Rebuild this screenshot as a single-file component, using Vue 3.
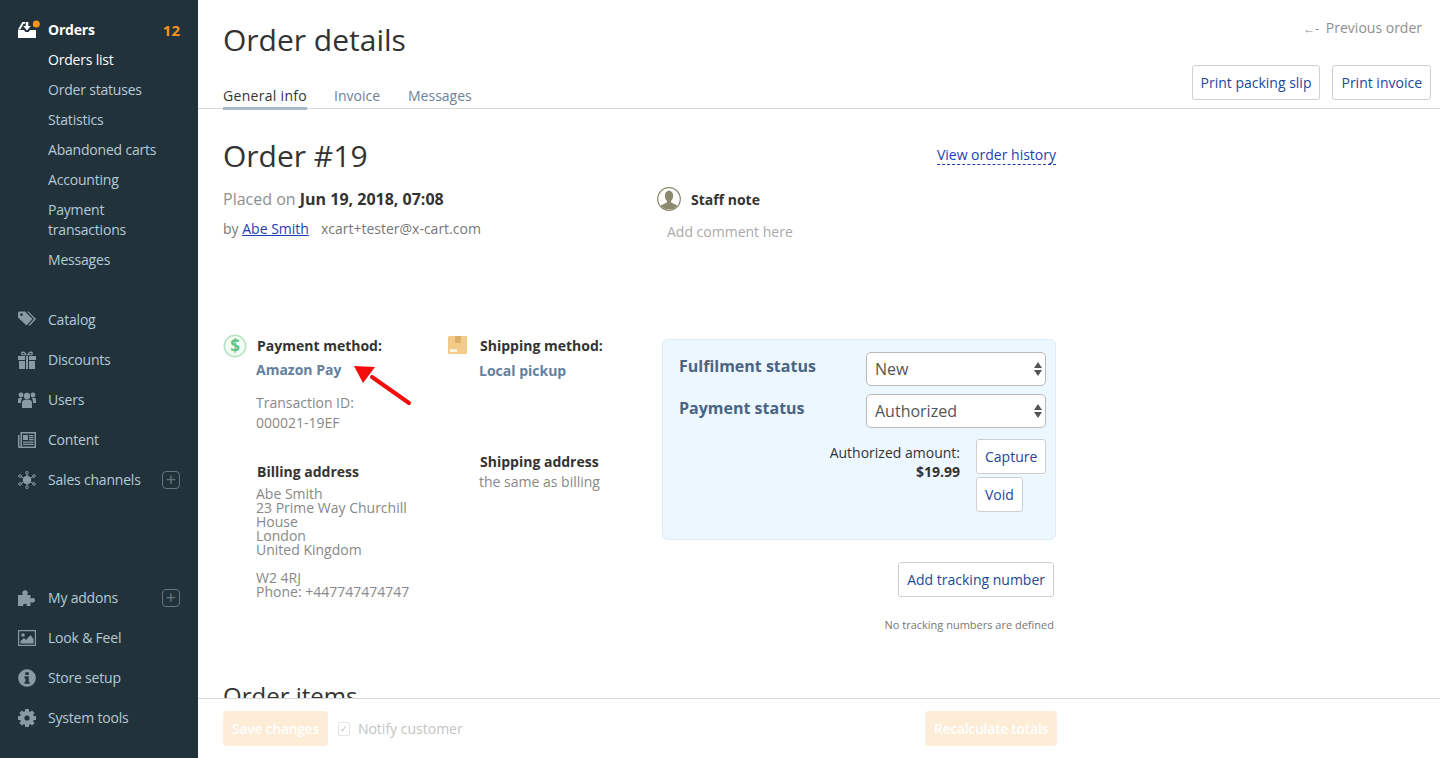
<template>
  <div class="page">
    <aside class="sidebar">
      <div class="nav-group">
        <div class="nav-item orders-head">
          <span class="nav-icon">
            <svg width="22" height="20" viewBox="0 0 22 20">
              <path d="M0 10H6L7.500 12H10.500L12 10H18V18H0Z" fill="#fff" />
              <path d="M0 9.500L4.300 2H7V3.800H5.500L2.400 9.500Z" fill="#fff" />
              <path d="M7.700 2H10.300V6H12.800L9 10.500L5.200 6H7.700Z" fill="#fff" />
              <circle cx="18.300" cy="4" r="3.500" fill="#f7931e" />
            </svg>
          </span>
          <span class="head-label">Orders</span>
          <span class="count">12</span>
        </div>
        <div
          v-for="sub in subItems"
          :key="sub"
          class="sub-item"
          :class="{ active: sub === 'Orders list' }"
        >{{ sub }}</div>
        <div class="nav-spacer"></div>
        <div v-for="item in mainItems" :key="item.label" class="nav-item">
          <span class="nav-icon">
            <svg width="18" height="18" viewBox="0 0 18 18" v-html="item.icon"></svg>
          </span>
          <span class="nav-label">{{ item.label }}</span>
          <span v-if="item.plus" class="plus">+</span>
        </div>
      </div>
      <div class="nav-group bottom">
        <div v-for="item in bottomItems" :key="item.label" class="nav-item">
          <span class="nav-icon">
            <svg width="18" height="18" viewBox="0 0 18 18" v-html="item.icon"></svg>
          </span>
          <span class="nav-label">{{ item.label }}</span>
          <span v-if="item.plus" class="plus">+</span>
        </div>
      </div>
    </aside>

    <main class="main">
      <header class="top">
        <div class="top-left">
          <h1>Order details</h1>
          <nav class="tabs">
            <a class="tab current">General info</a>
            <a class="tab">Invoice</a>
            <a class="tab last">Messages</a>
          </nav>
        </div>
        <div class="top-right">
          <div class="prev"><span class="prev-arrow">←-</span> Previous order</div>
          <div class="top-buttons">
            <button class="btn">Print packing slip</button>
            <button class="btn">Print invoice</button>
          </div>
        </div>
      </header>

      <section class="content">
        <div class="order-row">
          <h2>Order #19</h2>
          <a class="history">View order history</a>
        </div>

        <div class="info-row">
          <div class="placed">
            <div class="placed-date">Placed on <b>Jun 19, 2018, 07:08</b></div>
            <div class="placed-by">by <a class="user-link">Abe Smith</a><span class="email">xcart+tester@x-cart.com</span></div>
          </div>
          <div class="staff">
            <div class="staff-title">
              <svg width="24" height="24" viewBox="0 0 24 24">
                <defs><clipPath id="staff-clip"><circle cx="12" cy="12" r="10.500" /></clipPath></defs>
                <circle cx="12" cy="12" r="11.300" fill="#fff" stroke="#8b8a6c" stroke-width="1.200" />
                <g clip-path="url(#staff-clip)" fill="#8b8a6c">
                  <ellipse cx="12" cy="9" rx="4.200" ry="5.400" />
                  <path d="M9.800 13h4.400v2.600l6.200 3V24H3.600v-5.400l6.200-3Z" />
                </g>
              </svg>
              <b>Staff note</b>
            </div>
            <div class="staff-comment">Add comment here</div>
          </div>
        </div>

        <div class="details">
          <div class="col col-pay">
            <div class="method">
              <svg class="method-icon" width="24" height="24" viewBox="0 0 24 24">
                <circle cx="12" cy="12" r="10.700" fill="#f3fbf5" stroke="#b4e2c2" stroke-width="1.500" />
                <text x="12" y="18" text-anchor="middle" class="dollar">$</text>
              </svg>
              <b>Payment method:</b>
            </div>
            <div class="method-value">Amazon Pay</div>
            <div class="txn">Transaction ID:<br />000021-19EF</div>
            <div class="addr-title">Billing address</div>
            <div class="addr">
              Abe Smith<br />23 Prime Way Churchill House<br />London<br />United Kingdom
              <div class="addr-zip">W2 4RJ<br />Phone: +447747474747</div>
            </div>
            <svg class="red-arrow" width="66" height="46" viewBox="0 0 66 46">
              <path d="M55 39L18 13" stroke="#f40c0c" stroke-width="4" stroke-linecap="round" />
              <path d="M0 2L21 3L9 19Z" fill="#f40c0c" />
            </svg>
          </div>

          <div class="col col-ship">
            <div class="method">
              <svg class="method-icon box-icon" width="20" height="20" viewBox="0 0 20 20">
                <rect width="19" height="18" rx="1" fill="#f2cb8a" />
                <rect x="7" width="6" height="7" fill="#dcae68" />
                <rect x="2" y="13" width="7" height="3" fill="#fbf2e2" />
              </svg>
              <b>Shipping method:</b>
            </div>
            <div class="method-value ship">Local pickup</div>
            <div class="addr-title ship">Shipping address</div>
            <div class="same">the same as billing</div>
          </div>

          <div class="col-status">
            <div class="status-box">
              <div class="status-row">
                <span class="status-label">Fulfilment status</span>
                <div class="select-wrap">
                  <select><option>New</option></select>
                  <svg class="select-arrows" width="8" height="14" viewBox="0 0 8 14"><path d="M4 0L8 6H0ZM4 14L0 8H8Z" fill="#555" /></svg>
                </div>
              </div>
              <div class="status-row">
                <span class="status-label">Payment status</span>
                <div class="select-wrap">
                  <select><option>Authorized</option></select>
                  <svg class="select-arrows" width="8" height="14" viewBox="0 0 8 14"><path d="M4 0L8 6H0ZM4 14L0 8H8Z" fill="#555" /></svg>
                </div>
              </div>
              <div class="amount-row">
                <div class="amount">Authorized amount:<br /><b>$19.99</b></div>
                <div class="amount-btns">
                  <button class="btn small">Capture</button>
                  <button class="btn small">Void</button>
                </div>
              </div>
            </div>
            <div class="tracking">
              <button class="btn">Add tracking number</button>
              <div class="no-tracking">No tracking numbers are defined</div>
            </div>
          </div>
        </div>

        <h2 class="items-title">Order items</h2>
      </section>

      <footer class="bottom-bar">
        <div class="bottom-inner">
          <div class="bottom-left">
            <button class="btn-save">Save changes</button>
            <label class="notify"><span class="check">✓</span>Notify customer</label>
          </div>
          <button class="btn-save">Recalculate totals</button>
        </div>
      </footer>
    </main>
  </div>
</template>

<script setup>
const subItems = [
  'Orders list',
  'Order statuses',
  'Statistics',
  'Abandoned carts',
  'Accounting',
  'Payment transactions',
  'Messages'
]

const gearTeeth = [0, 45, 90, 135]
  .map((a) => `<rect x="7" y="0" width="4" height="18" rx=".6" transform="rotate(${a} 9 9)"/>`)
  .join('')

const icons = {
  tag: '<path d="M0 1.500L1 .5H7L14.500 8L8.500 14.500L0 6.500Z M3.500 2.200a1.400 1.400 0 1 0 .01 0Z" fill-rule="evenodd"/><path d="M9 .5H10.500L18 8L12 14.500H10.300L16 8Z"/>',
  gift: '<path d="M0 5H7V9H0ZM11 5H18V9H11ZM1 10H7V18H1ZM11 10H17V18H11ZM8 5H10V18H8Z"/><path d="M5 .5C7 .5 8.500 2.500 9 4.500C9.500 2.500 11 .5 13 .5C15 .5 15.500 3 14 4.300H4C2.500 3 3 .5 5 .5ZM5 2C4.200 2 4 3 4.700 3.300H7.300C6.800 2.600 6 2 5 2ZM13 2C12 2 11.200 2.600 10.700 3.300H13.300C14 3 13.800 2 13 2Z" fill-rule="evenodd"/>',
  users: '<circle cx="9" cy="5" r="3.200"/><circle cx="3" cy="4" r="2.400"/><circle cx="15" cy="4" r="2.400"/><path d="M4 17V11.500C4 9.500 6 8.500 9 8.500S14 9.500 14 11.500V17Z"/><path d="M0 12V8.500C0 7 1.500 6.800 4.500 7C3.200 8 3 9.500 3 12ZM18 12V8.500C18 7 16.500 6.800 13.500 7C14.800 8 15 9.500 15 12Z"/>',
  content: '<path d="M2.500 1H18V17H1.500C.5 17 0 16.300 0 15.500V4H1.500V15.500H2.500ZM4 2.500V15.500H16.500V2.500Z" fill-rule="evenodd"/><path d="M5 4H10V9H5ZM11 4H15.500V5.200H11ZM11 6H15.500V7.200H11ZM11 8H15.500V9.200H11ZM5 10.500H15.500V11.700H5ZM5 12.800H15.500V14H5Z"/>',
  hub: '<circle cx="9" cy="9" r="4.200"/><g fill="none" stroke="currentColor" stroke-width="1"><circle cx="9" cy="1.800" r="1.300"/><circle cx="9" cy="16.200" r="1.300"/><circle cx="2" cy="5" r="1.300"/><circle cx="16" cy="5" r="1.300"/><circle cx="2" cy="13" r="1.300"/><circle cx="16" cy="13" r="1.300"/><path d="M9 3V6M9 12V15M3 5.600L6 7.300M15 5.600L12 7.300M3 12.400L6 10.700M15 12.400L12 10.700"/></g>',
  puzzle: '<path d="M0 6H5C4 4.800 4 3.500 4.500 2.700C5 1.700 6 1.200 7 1.200S9 1.700 9.500 2.700C10 3.500 10 4.800 9 6H12.500V9.500C13.500 8.700 15 8.800 15.900 9.300C17.500 10.200 17.500 12.300 15.900 13.200C15 13.700 13.500 13.800 12.500 13V17H8.500C9.300 16 8.800 14.700 7 14.700S4.700 16 5.500 17H0Z"/>',
  image: '<path d="M0 1H18V17H0ZM1.200 2.200V15.800H16.800V2.200Z" fill-rule="evenodd"/><circle cx="5" cy="6" r="1.800"/><path d="M2.500 14.500V12L6 9L8 11L12.500 6L15.500 10V14.500Z"/>',
  info: '<path d="M9 .2a8.800 8.800 0 1 0 .01 0ZM7.300 3.200H10.700V6H7.300ZM6.500 7.300H10.700V12.700H11.700V14.800H6.500V12.700H7.500V9.400H6.500Z" fill-rule="evenodd"/>',
  gear: `<g>${gearTeeth}</g><circle cx="9" cy="9" r="5" fill="none" stroke="currentColor" stroke-width="4"/><circle cx="9" cy="9" r="2.600" fill="#22323a"/>`
}

const mainItems = [
  { label: 'Catalog', icon: icons.tag },
  { label: 'Discounts', icon: icons.gift },
  { label: 'Users', icon: icons.users },
  { label: 'Content', icon: icons.content },
  { label: 'Sales channels', icon: icons.hub, plus: true }
]

const bottomItems = [
  { label: 'My addons', icon: icons.puzzle, plus: true },
  { label: 'Look & Feel', icon: icons.image },
  { label: 'Store setup', icon: icons.info },
  { label: 'System tools', icon: icons.gear }
]
</script>

<style>
body { margin: 0; background: #fff; }
</style>

<style scoped>
.page { display: flex; height: 758px; overflow: hidden; font-family: "Open Sans", sans-serif; font-size: 14px; color: #333; }

.sidebar { width: 198px; flex: none; background: #22323a; display: flex; flex-direction: column; padding: 15px 0 20px; box-sizing: border-box; color: #b4cad8; letter-spacing: -0.2px; }
.nav-group.bottom { margin-top: auto; }
.nav-spacer { height: 25px; }
.nav-item { display: flex; align-items: center; height: 40px; line-height: 20px; padding: 0 18px; color: #8a9aa3; }
.orders-head { height: 30px; color: #fff; }
.nav-icon { width: 30px; flex: none; display: flex; align-items: center; }
.nav-icon svg { fill: currentColor; display: block; }
.head-label { font-weight: 700; color: #fff; flex: 1; }
.count { font-weight: 700; font-size: 15px; letter-spacing: 0; color: #f7931e; }
.nav-label { flex: 1; color: #b4cad8; }
.sub-item { padding: 5px 30px 5px 48px; line-height: 20px; color: #b4cad8; }
.sub-item.active { color: #fff; }
.plus { width: 18px; height: 18px; border: 1px solid #66757d; border-radius: 4px; color: #66757d; font-size: 18px; line-height: 15px; text-align: center; box-sizing: border-box; letter-spacing: 0; }

.main { flex: 1; min-width: 0; display: flex; flex-direction: column; }
.top { height: 109px; flex: none; box-sizing: border-box; border-bottom: 1px solid #d8d8d8; display: flex; justify-content: space-between; padding: 0 9px 0 25px; }
h1 { margin: 20px 0 0; font-size: 30px; line-height: 40px; font-weight: 400; color: #333; }
.tabs { display: flex; gap: 27px; margin-top: 26px; }
.tab { height: 20px; padding-bottom: 1px; line-height: 20px; color: #6d8199; }
.tab.last { margin-left: 1px; }
.tab.current { color: #333; letter-spacing: 0.3px; border-bottom: 3px solid #a8b8c6; }
.top-right { display: flex; flex-direction: column; align-items: flex-end; }
.prev { margin: 18px 9px 0 0; line-height: 20px; color: #8f8f8f; }
.prev-arrow { margin-right: 3px; font-size: 12px; }
.top-buttons { display: flex; gap: 12px; margin-top: 26px; }

.btn { height: 35px; padding: 0 8px; background: #fff; border: 1px solid #cfcfcf; border-radius: 3px; font: 14px "Open Sans", sans-serif; color: #23479a; box-sizing: border-box; }
.btn.small { height: 35px; }

.content { flex: 1; min-height: 0; overflow: hidden; padding-left: 25px; width: 834px; box-sizing: content-box; }
.order-row { display: flex; justify-content: space-between; align-items: center; margin-top: 27px; height: 40px; width: 833px; }
h2 { margin: 0; font-size: 30px; line-height: 40px; font-weight: 400; color: #333; }
.history { color: #1a3fb0; border-bottom: 1px dashed #1a3fb0; line-height: 18px; margin-bottom: 2px; }

.info-row { display: flex; margin-top: 11px; }
.placed { width: 434px; }
.placed-date { font-size: 16px; line-height: 24px; color: #8f8f8f; }
.placed-date b { color: #333; }
.placed-by { margin-top: 8px; line-height: 20px; color: #777; }
.user-link { color: #1a3fb0; text-decoration: underline; }
.email { margin-left: 12px; color: #777; }
.staff-title { display: flex; align-items: center; gap: 10px; height: 24px; }
.staff-comment { margin: 11px 0 0 10px; line-height: 20px; color: #aaa; }

.details { display: grid; grid-template-columns: 224px 215px 394px; margin-top: 97px; }
.col { position: relative; }
.method { display: flex; align-items: center; line-height: 20px; height: 20px; margin-top: -3px; }
.method b { color: #333; }
.method-icon { flex: none; margin: 0 10px 0 0; }
.box-icon { margin: 0 12px 0 1px; }
.dollar { font: 700 17px "Open Sans", sans-serif; fill: #62c484; }
.method-value { margin: 4px 0 0 33px; line-height: 20px; font-weight: 700; color: #63809f; }
.method-value.ship { margin: 5px 0 0 32px; }
.txn { margin: 13px 0 0 33px; line-height: 20px; color: #888; }
.addr-title { margin: 29px 0 0 34px; line-height: 20px; font-weight: 700; color: #333; }
.addr-title.ship { margin: 71px 0 0 33px; }
.addr { margin: 5px 0 0 33px; width: 165px; line-height: 14px; color: #888; }
.addr-zip { margin-top: 14px; }
.same { margin-left: 32px; line-height: 20px; color: #888; }
.red-arrow { position: absolute; left: 131px; top: 25px; }

.status-box { height: 201px; box-sizing: border-box; background: #edf7ff; border: 1px solid #dcebf5; border-radius: 6px; padding: 12px 9px 0 16px; }
.status-row { display: flex; justify-content: space-between; margin-bottom: 8px; }
.status-label { font-size: 16px; font-weight: 700; color: #4a6583; line-height: 28px; }
.select-wrap { position: relative; width: 180px; height: 34px; }
.select-wrap select { width: 100%; height: 100%; appearance: none; background: #fff; border: 1px solid #b8b8b8; border-radius: 5px; padding: 0 8px; font: 16px "Open Sans", sans-serif; color: #555; box-sizing: border-box; }
.select-arrows { position: absolute; right: 4px; top: 10px; }
.amount-row { display: flex; justify-content: flex-end; gap: 16px; margin-top: 11px; }
.amount { text-align: right; line-height: 19px; padding-top: 4px; color: #333; }
.amount-btns { display: flex; flex-direction: column; align-items: flex-start; gap: 3px; width: 70px; }

.tracking { margin-top: 22px; display: flex; flex-direction: column; align-items: flex-end; padding-right: 2px; }
.no-tracking { margin-top: 20px; font-size: 11px; line-height: 16px; color: #777; }

.items-title { margin-top: 43px; font-size: 24px; }

.bottom-bar { height: 60px; flex: none; box-sizing: border-box; border-top: 1px solid #d8d8d8; background: #fff; padding: 12px 0 0 25px; }
.bottom-inner { display: flex; justify-content: space-between; width: 834px; }
.bottom-left { display: flex; align-items: center; gap: 10px; }
.btn-save { height: 35px; padding: 0 8px; background: #fdecd6; border: 1px solid #fcefdc; border-radius: 3px; color: #fff; font: 600 14px "Open Sans", sans-serif; letter-spacing: -0.3px; box-sizing: border-box; }
.notify { display: flex; align-items: center; color: #c4c4c4; }
.check { width: 10px; height: 12px; border: 1px solid #e4e4e4; border-radius: 2px; margin-right: 8px; font-size: 9px; line-height: 12px; text-align: center; color: #bbb; }
</style>
